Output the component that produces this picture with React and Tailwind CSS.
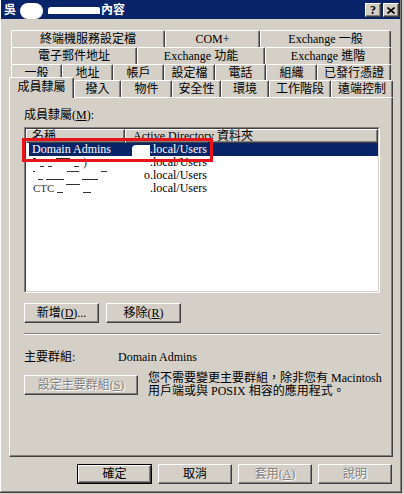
import React from 'react'

const FONT = "font-['Liberation_Serif','Noto_Sans_CJK_TC',serif]"

const raised =
  'border border-t-white border-l-white border-r-[#404040] border-b-[#404040] shadow-[inset_-1px_-1px_0_#808080]'

const tabBase =
  'flex items-center justify-center h-full whitespace-nowrap border-t border-l border-r border-t-white border-l-white border-r-[#404040] shadow-[inset_-1px_0_0_#808080] rounded-tl-[2px] rounded-tr-[2px]'

const row1 = [
  { label: '終端機服務設定檔', w: 'w-[154px]' },
  { label: 'COM+', w: 'w-[95px]' },
  { label: 'Exchange 一般', w: 'w-[131px]' },
]

const row2 = [
  { label: '電子郵件地址', w: 'w-[126px]' },
  { label: 'Exchange 功能', w: 'w-[128px]' },
  { label: 'Exchange 進階', w: 'w-[126px]' },
]

const row3 = [
  { label: '一般', w: 'w-[51px]' },
  { label: '地址', w: 'w-[51px]' },
  { label: '帳戶', w: 'w-[51px]' },
  { label: '設定檔', w: 'w-[51px]' },
  { label: '電話', w: 'w-[51px]' },
  { label: '組織', w: 'w-[51px]' },
  { label: '已發行憑證', w: 'w-[74px]' },
]

const row4 = [
  { label: '撥入', w: 'w-[47px]' },
  { label: '物件', w: 'w-[51px]' },
  { label: '安全性', w: 'w-[49px]' },
  { label: '環境', w: 'w-[48px]' },
  { label: '工作階段', w: 'w-[62px]' },
  { label: '遠端控制', w: 'w-[62px]' },
]

const TabRow = ({ tabs, className }) => (
  <div className={`flex ${className}`}>
    {tabs.map((t) => (
      <div key={t.label} className={`${tabBase} ${t.w}`}>
        {t.label}
      </div>
    ))}
  </div>
)

const Btn = ({ children, w, isDefault, disabled }) => {
  const text = disabled ? 'text-[#808080] [text-shadow:1px_1px_0_#ffffff]' : 'text-black'
  const inner = (
    <div className={`h-full w-full flex items-center justify-center whitespace-nowrap ${raised} ${text}`}>
      {children}
    </div>
  )
  if (isDefault) {
    return <div className={`h-[20px] border border-black ${w}`}>{inner}</div>
  }
  return <div className={`h-[20px] ${w}`}>{inner}</div>
}

const Acc = ({ c }) => (
  <>
    (<span className="underline underline-offset-1">{c}</span>)
  </>
)

const Line = ({ w, top }) => (
  <span className={`inline-block h-px bg-[#333] ${w} ${top ? 'self-start mt-[2px]' : 'self-end mb-[2px]'}`} />
)

const App = () => {
  return (
    <div className={`relative w-[404px] h-[494px] bg-[#D4D0C8] overflow-hidden text-[12px] leading-[14px] text-black ${FONT}`}>
      <div className="w-[402px] h-[493px] border-r border-b border-[#404040]">
        <div className="h-full flex flex-col border-l border-l-white border-r border-b border-r-[#808080] border-b-[#808080]">
          {/* title bar */}
          <div className="h-[19px] bg-[#0A246A] flex items-center pl-[3px] pr-px text-white font-bold">
            <span>吳</span>
            <span className="inline-block w-[23px] h-[16px] rounded-full bg-white ml-[4px] mt-[3px]" />
            <span className="inline-block w-[52px] h-[7px] bg-white ml-[5px] mt-[2px] rounded-tl-[3px] rounded-tr-[2px]" />
            <span className="ml-px">內容</span>
            <div className="ml-auto flex gap-[2px] mt-[1px]">
              <div className={`w-[16px] h-[14px] bg-[#D4D0C8] flex items-center justify-center text-black font-bold text-[12px] ${raised}`}>
                ?
              </div>
              <div className={`w-[16px] h-[14px] bg-[#D4D0C8] flex items-center justify-center ${raised}`}>
                <svg width="8" height="7" viewBox="0 0 8 7">
                  <path d="M0.5 0.5 L7.5 6.5 M7.5 0.5 L0.5 6.5" stroke="#000" strokeWidth="1.6" />
                </svg>
              </div>
            </div>
          </div>

          {/* tabs */}
          <TabRow tabs={row1} className="h-[17px] ml-[10px] mt-[11px]" />
          <TabRow tabs={row2} className="h-[17px] ml-[10px]" />
          <TabRow tabs={row3} className="h-[16px] ml-[10px]" />
          <div className="flex items-end h-[17px] ml-[8px]">
            <div className="relative z-10 w-[65px] h-[21px] -mb-px bg-[#D4D0C8] flex items-center justify-center pb-[2px] border-t border-l border-r border-t-white border-l-white border-r-[#404040] shadow-[inset_-1px_0_0_#808080] rounded-tl-[2px] rounded-tr-[2px]">
              成員隸屬
            </div>
            {row4.map((t) => (
              <div key={t.label} className={`${tabBase} ${t.w} h-[17px]`}>
                {t.label}
              </div>
            ))}
          </div>

          {/* panel */}
          <div className={`ml-[8px] w-[384px] h-[360px] ${raised} pl-[14px] flex flex-col`}>
            <div className="mt-[10px] h-[14px]">
              成員隸屬<Acc c="M" />:
            </div>

            <div className="mt-[5px] w-[356px] h-[166px] border border-t-[#808080] border-l-[#808080] border-r-white border-b-white">
              <div className="h-full bg-white border border-t-[#404040] border-l-[#404040] border-r-[#D4D0C8] border-b-[#D4D0C8] flex flex-col leading-[13px]">
                <div className="flex h-[14px] bg-[#D4D0C8] leading-[12px]">
                  <div className={`w-[99px] pl-[5px] flex items-center ${raised}`}>名稱</div>
                  <div className={`w-[253px] pl-[7px] flex items-center whitespace-nowrap ${raised}`}>
                    Active Directory 資料夾
                  </div>
                </div>
                <div className="flex h-[13px] ml-[3px] bg-[#0A246A] text-white">
                  <div className="w-[99px] pl-[3px] whitespace-nowrap">Domain Admins</div>
                  <div className="flex items-center pl-[4px]">
                    <span className="inline-block w-[18px] h-[11px] bg-white rounded-tl-[4px] mt-[2px]" />
                    <span>.local/Users</span>
                  </div>
                </div>
                <div className="flex h-[13px] ml-[3px]">
                  <div className="w-[99px] pl-[4px] flex gap-[4px] h-full">
                    <Line w="w-[3px]" top />
                    <Line w="w-[4px]" />
                    <Line w="w-[4px]" />
                    <Line w="w-[14px]" top />
                    <Line w="w-[5px]" />
                    <span className="text-[#333]">)</span>
                  </div>
                  <div className="pl-[22px]">.local/Users</div>
                </div>
                <div className="flex h-[13px] ml-[3px]">
                  <div className="w-[99px] pl-[4px] flex gap-[3px] h-full">
                    <Line w="w-[2px]" top />
                    <Line w="w-[5px]" />
                    <Line w="w-[18px]" />
                    <Line w="w-[12px]" top />
                    <Line w="w-[16px]" />
                    <Line w="w-[6px]" top />
                  </div>
                  <div className="pl-[16px]">o.local/Users</div>
                </div>
                <div className="flex h-[13px] ml-[3px]">
                  <div className="w-[99px] pl-[4px] flex gap-[3px] h-full">
                    <span className="text-[#333] text-[11px]">CTC</span>
                    <Line w="w-[6px]" />
                    <Line w="w-[14px]" top />
                    <Line w="w-[8px]" />
                  </div>
                  <div className="pl-[22px]">.local/Users</div>
                </div>
              </div>
            </div>

            <div className="mt-[10px] flex gap-[7px]">
              <Btn w="w-[75px]">
                新增<Acc c="D" />...
              </Btn>
              <Btn w="w-[75px]">
                移除<Acc c="R" />
              </Btn>
            </div>

            <div className="mt-[10px] w-[356px] h-[2px] border-t border-t-[#808080] border-b border-b-white" />

            <div className="mt-[15px] h-[14px] flex">
              <span className="w-[94px]">主要群組:</span>
              <span>Domain Admins</span>
            </div>

            <div className="mt-[11px] flex items-start gap-[10px]">
              <Btn w="w-[114px]" disabled>
                設定主要群組<Acc c="S" />
              </Btn>
              <div className="flex flex-col -mt-[3px] whitespace-nowrap leading-[13px]">
                <div className="h-[13px]">您不需要變更主要群組，除非您有 Macintosh</div>
                <div className="h-[13px]">用戶端或與 POSIX 相容的應用程式。</div>
              </div>
            </div>
          </div>

          {/* bottom buttons */}
          <div className="mt-[7px] ml-[76px] flex gap-[6px]">
            <Btn w="w-[75px]" isDefault>
              確定
            </Btn>
            <Btn w="w-[74px]">取消</Btn>
            <Btn w="w-[74px]" disabled>
              套用<Acc c="A" />
            </Btn>
            <Btn w="w-[74px]" disabled>
              說明
            </Btn>
          </div>
        </div>
      </div>

      {/* red highlight annotation */}
      <div className="absolute left-[22px] top-[138px] w-[191px] h-[24px] border-[3px] border-[#E8141B]" />
    </div>
  )
}

export default App
